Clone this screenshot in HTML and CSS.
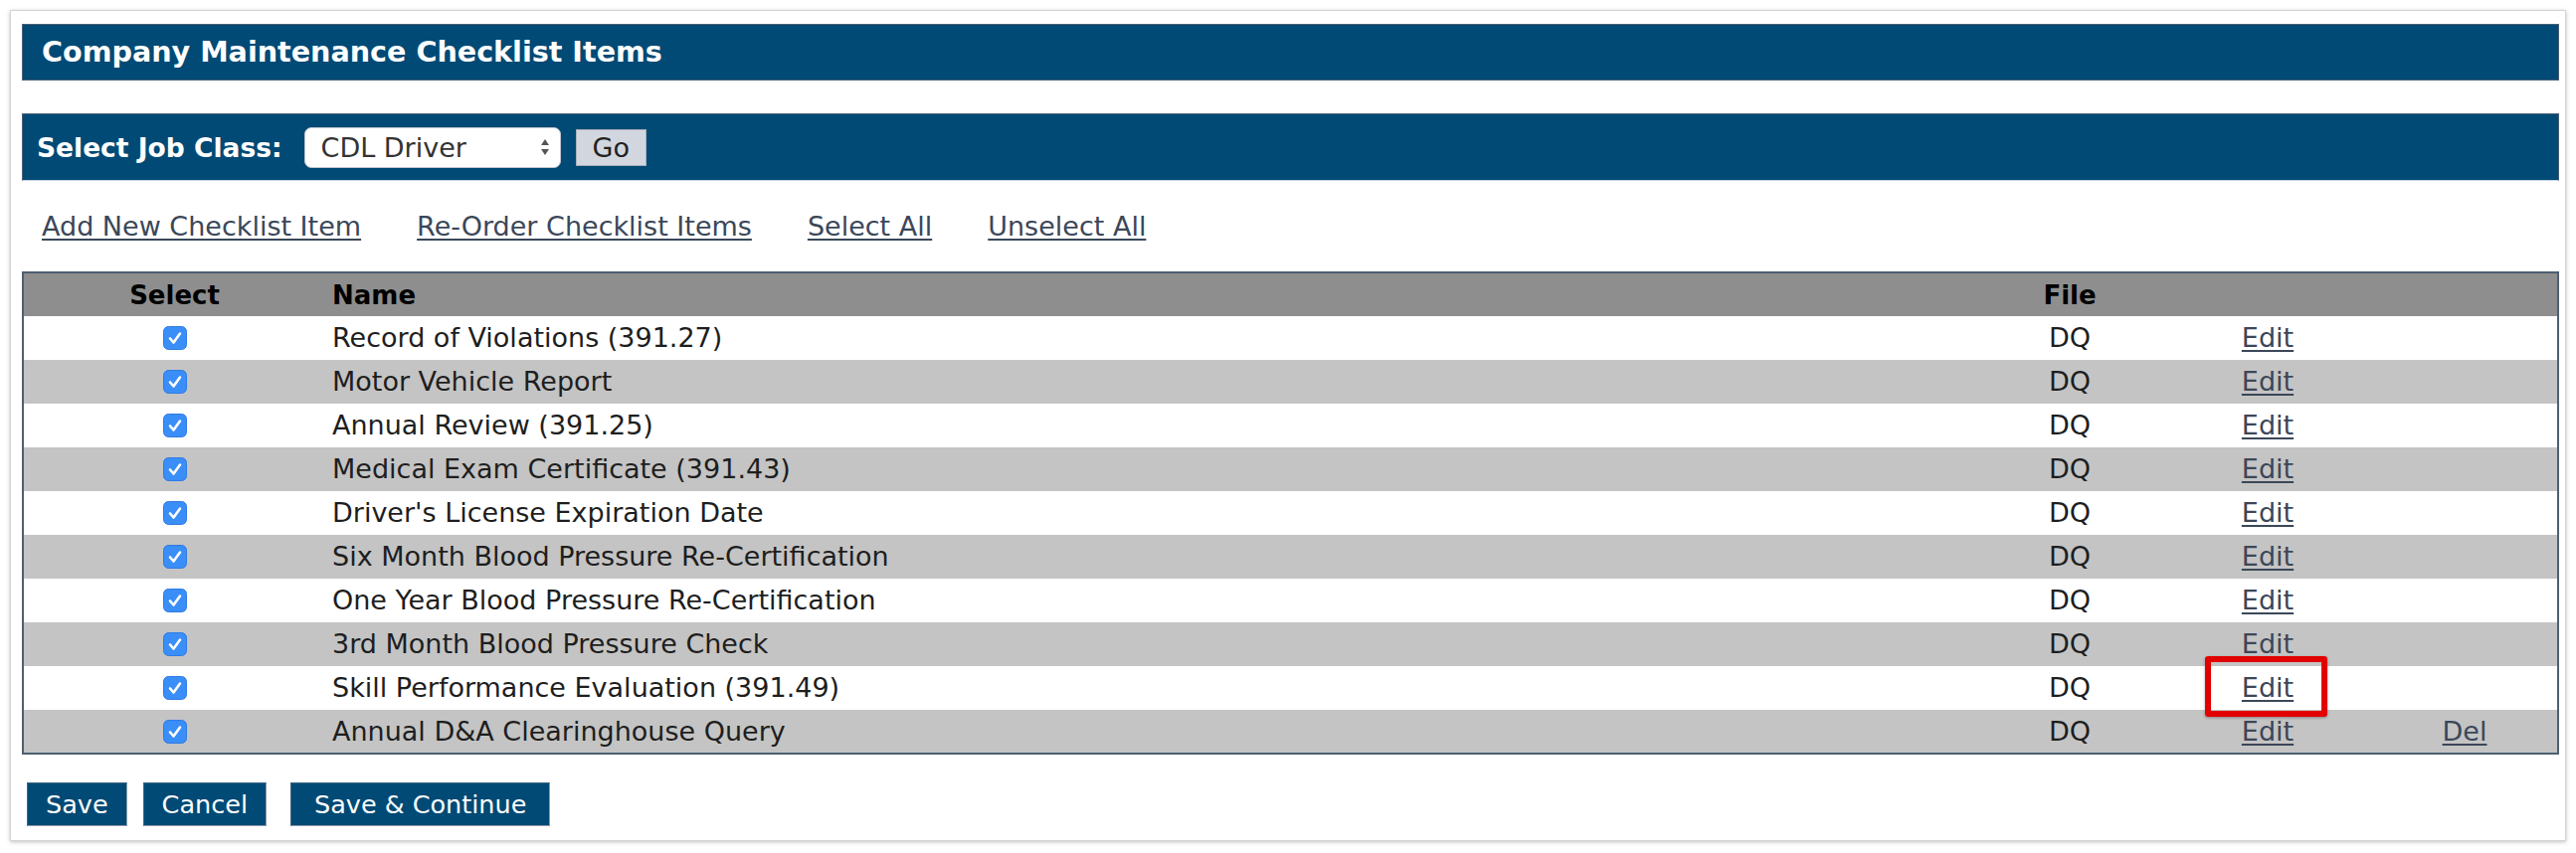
FILE: index.html
```html
<!DOCTYPE html>
<html lang="en">
<head>
    <meta charset="UTF-8">
    <title>Company Maintenance Checklist Items</title>
    <link rel="stylesheet" href="styles.css">
</head>
<body>
    <div class="page">
        <div class="card">
            <h1 class="panel-title">Company Maintenance Checklist Items</h1>

            <form class="job-bar">
                <label for="job-class">Select Job Class:</label>
                <div class="select-box">
                    <select id="job-class">
                        <option>CDL Driver</option>
                    </select>
                    <svg class="select-arrows" width="10" height="18" viewBox="0 0 10 18">
                        <path d="M5 1 L9 7 L1 7 Z"/>
                        <path d="M5 17 L9 11 L1 11 Z"/>
                    </svg>
                </div>
                <button type="button" class="go-btn">Go</button>
            </form>

            <div class="actions">
                <a href="#">Add New Checklist Item</a>
                <a href="#">Re-Order Checklist Items</a>
                <a href="#">Select All</a>
                <a href="#">Unselect All</a>
            </div>

            <table class="checklist">
                <colgroup>
                    <col class="col-select">
                    <col>
                    <col class="col-file">
                    <col class="col-edit">
                    <col class="col-del">
                </colgroup>
                <thead>
                    <tr>
                        <th class="center">Select</th>
                        <th>Name</th>
                        <th class="center">File</th>
                        <th></th>
                        <th></th>
                    </tr>
                </thead>
                <tbody id="rows"></tbody>
            </table>

            <div class="form-buttons">
                <button type="button" class="btn">Save</button>
                <button type="button" class="btn">Cancel</button>
                <button type="button" class="btn btn-wide">Save &amp; Continue</button>
            </div>
        </div>
    </div>

    <script>
        const items = [
            'Record of Violations (391.27)',
            'Motor Vehicle Report',
            'Annual Review (391.25)',
            'Medical Exam Certificate (391.43)',
            "Driver's License Expiration Date",
            'Six Month Blood Pressure Re-Certification',
            'One Year Blood Pressure Re-Certification',
            '3rd Month Blood Pressure Check',
            'Skill Performance Evaluation (391.49)',
            'Annual D&A Clearinghouse Query'
        ];

        const tbody = document.getElementById('rows');

        // checkbox drawn as a blue rounded square with a white tick
        const checkSvg = '<svg class="check" width="24" height="24" viewBox="0 0 24 24">' +
            '<rect x="0.5" y="0.5" width="23" height="23" rx="5" fill="#3a8ef7" stroke="#2f7be6"/>' +
            '<path d="M7 12.5 L10.5 16.5 L17 7.5" fill="none" stroke="#fff" stroke-width="2.6" stroke-linecap="round" stroke-linejoin="round"/>' +
            '</svg>';

        items.forEach((name, i) => {
            const tr = document.createElement('tr');
            const isLast = i === items.length - 1;
            const marked = i === 8 ? ' marked' : '';
            tr.innerHTML =
                `<td class="center">${checkSvg}</td>` +
                `<td class="name"></td>` +
                `<td class="center">DQ</td>` +
                `<td class="center edit${marked}"><a href="#">Edit</a></td>` +
                `<td class="center">${isLast ? '<a href="#">Del</a>' : ''}</td>`;
            tr.querySelector('.name').textContent = name;
            tbody.appendChild(tr);
        });
    </script>
</body>
</html>
```

FILE: styles.css
```css
body {
    margin: 0;
    background: #fff;
    font-family: "DejaVu Sans", Verdana, sans-serif;
    font-size: 27px;
    color: #1e1e1e;
}

.page {
    padding: 10px;
}

.card {
    background: #fff;
    border: 1px solid #d4d4d4;
    box-shadow: 0 1px 4px rgba(0, 0, 0, 0.25);
    padding: 13px 6px 14px 11px;
}

.panel-title {
    margin: 0;
    background: #014a75;
    border: 1px solid #4a5f74;
    color: #fff;
    font-size: 28.6px;
    font-weight: bold;
    line-height: 35px;
    padding: 10px 19px;
}

.job-bar {
    margin: 33px 0 0;
    height: 68px;
    box-sizing: border-box;
    background: #014a75;
    border: 1px solid #4a5f74;
    border-bottom-color: #c9d6e4;
    display: flex;
    align-items: center;
    padding: 0 14px;
}

.job-bar label {
    color: #fff;
    font-weight: bold;
    font-size: 26.5px;
    margin-right: 22px;
}

.select-box {
    width: 258px;
    height: 41px;
    box-sizing: border-box;
    background: #fff;
    border: 1px solid #c2c7cf;
    border-radius: 7px;
    display: flex;
    align-items: center;
    padding: 0 10px 0 16px;
}

.select-box select {
    appearance: none;
    -webkit-appearance: none;
    border: none;
    background: transparent;
    font-family: inherit;
    font-size: 27px;
    color: #333;
    flex: 1;
    padding: 0;
    outline: none;
}

.select-arrows path {
    fill: #555;
}

.go-btn {
    margin-left: 15px;
    height: 37px;
    padding: 0 16px;
    background: #d2d7df;
    border: 1px solid #a9b0bb;
    font-family: inherit;
    font-size: 27px;
    color: #222;
    line-height: 33px;
}

.actions {
    margin-top: 30px;
    padding-left: 20px;
    display: flex;
    gap: 56px;
    line-height: 31px;
}

.actions a,
.checklist a {
    color: #3b4759;
    text-decoration: underline;
    text-underline-offset: 3px;
}

.checklist {
    margin-top: 30px;
    width: 100%;
    table-layout: fixed;
    border-collapse: collapse;
    border: 2px solid #4e5f72;
}

.col-select { width: 304px; }
.col-file { width: 200px; }
.col-edit { width: 204px; }
.col-del { width: 187px; }

.checklist th,
.checklist td {
    height: 44px;
    box-sizing: border-box;
    padding: 0 7px;
    line-height: 32px;
    text-align: left;
    white-space: nowrap;
}

.checklist th {
    background: #8e8e8e;
    color: #000;
    font-size: 26px;
    font-weight: bold;
}

.checklist tbody tr:nth-child(even) td {
    background: #c4c4c4;
}

.checklist .center {
    text-align: center;
}

.checklist td.edit {
    padding-right: 13px;
}

.check {
    display: block;
    margin: 0 auto;
}

/* red callout drawn round the highlighted Edit link */
.checklist td.marked {
    position: relative;
}

.checklist td.marked::after {
    content: "";
    position: absolute;
    left: 36px;
    top: -10px;
    width: 123px;
    height: 61px;
    box-sizing: border-box;
    border: 6px solid #e30000;
    border-radius: 3px;
    box-shadow: 0 1px 3px rgba(0, 0, 0, 0.35);
}

.form-buttons {
    margin-top: 28px;
    padding-left: 5px;
    display: flex;
    gap: 16px;
}

.btn {
    height: 44px;
    padding: 0 18px;
    background: #014a75;
    border: 1px solid #8c9aa8;
    border-top-color: #3f6585;
    border-left-color: #3f6585;
    color: #fff;
    font-family: inherit;
    font-size: 25.5px;
    line-height: 40px;
}

.btn-wide {
    margin-left: 8px;
    padding: 0 23px;
}
```
